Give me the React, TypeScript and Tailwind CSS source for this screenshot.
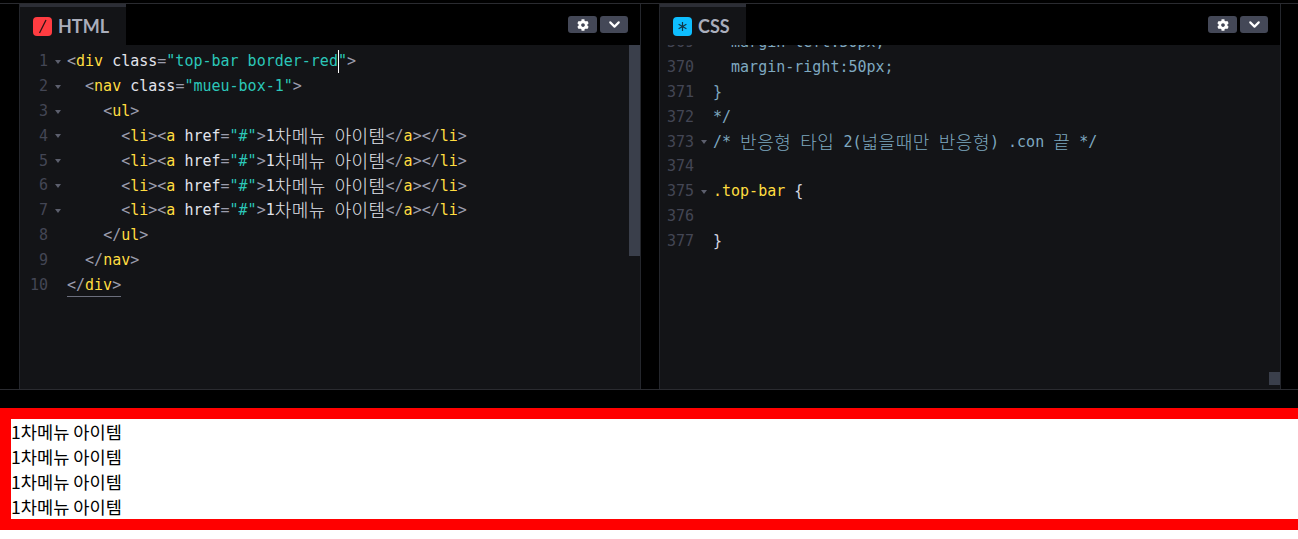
import type React from "react";
import { ChevronDown } from "lucide-react";
import { FaCog } from "react-icons/fa";

const monoFont = "font-['DejaVu_Sans_Mono','Noto_Sans_CJK_KR',monospace]";

// small syntax colour helpers
const P = ({ children }: { children: React.ReactNode }) => <span className="text-[#9b9dad]">{children}</span>;
const Tag = ({ children }: { children: React.ReactNode }) => <span className="text-[#ffdd40]">{children}</span>;
const Attr = ({ children }: { children: React.ReactNode }) => <span className="text-[#e2e4ec]">{children}</span>;
const Str = ({ children }: { children: React.ReactNode }) => <span className="text-[#2bc7b9]">{children}</span>;
const Han = ({ children }: { children: React.ReactNode }) => (
  <span className="align-[-2px] font-['Noto_Sans_CJK_KR',sans-serif] text-[18px] leading-none font-light tracking-[0.4px]">
    {children}
  </span>
);

const MenuLine = () => (
  <>
    {"      "}
    <P>&lt;</P>
    <Tag>li</Tag>
    <P>&gt;&lt;</P>
    <Tag>a</Tag> <Attr>href</Attr>
    <P>=</P>
    <Str>"#"</Str>
    <P>&gt;</P>
    <span className="text-[#e2e4ec]">
      1<Han>차메뉴</Han> <Han>아이템</Han>
    </span>
    <P>&lt;/</P>
    <Tag>a</Tag>
    <P>&gt;&lt;/</P>
    <Tag>li</Tag>
    <P>&gt;</P>
  </>
);

const htmlLines: { fold: boolean; code: React.ReactNode }[] = [
  {
    fold: true,
    code: (
      <>
        <P>&lt;</P>
        <Tag>div</Tag> <Attr>class</Attr>
        <P>=</P>
        <Str>"top-bar border-red</Str>
        <span className="relative">
          <span className="absolute left-0 top-[-2px] h-[23px] w-px bg-white" />
          <Str>"</Str>
        </span>
        <P>&gt;</P>
      </>
    ),
  },
  {
    fold: true,
    code: (
      <>
        {"  "}
        <P>&lt;</P>
        <Tag>nav</Tag> <Attr>class</Attr>
        <P>=</P>
        <Str>"mueu-box-1"</Str>
        <P>&gt;</P>
      </>
    ),
  },
  {
    fold: true,
    code: (
      <>
        {"    "}
        <P>&lt;</P>
        <Tag>ul</Tag>
        <P>&gt;</P>
      </>
    ),
  },
  { fold: true, code: <MenuLine /> },
  { fold: true, code: <MenuLine /> },
  { fold: true, code: <MenuLine /> },
  { fold: true, code: <MenuLine /> },
  {
    fold: false,
    code: (
      <>
        {"    "}
        <P>&lt;/</P>
        <Tag>ul</Tag>
        <P>&gt;</P>
      </>
    ),
  },
  {
    fold: false,
    code: (
      <>
        {"  "}
        <P>&lt;/</P>
        <Tag>nav</Tag>
        <P>&gt;</P>
      </>
    ),
  },
  {
    fold: false,
    code: (
      <span className="border-b border-[#6b6e7c] pb-[2px]">
        <P>&lt;/</P>
        <Tag>div</Tag>
        <P>&gt;</P>
      </span>
    ),
  },
];

const Comment = ({ children }: { children: React.ReactNode }) => <span className="text-[#7fa9c0]">{children}</span>;
const ComHan = ({ children }: { children: React.ReactNode }) => (
  <span className="align-[-2px] font-['Noto_Sans_CJK_KR',sans-serif] text-[18px] leading-none font-light tracking-[0.5px] text-[#7fa9c0]">
    {children}
  </span>
);

const cssLines: { num: number; fold: boolean; code: React.ReactNode }[] = [
  { num: 369, fold: false, code: <Comment>{"  margin-left:50px;"}</Comment> },
  { num: 370, fold: false, code: <Comment>{"  margin-right:50px;"}</Comment> },
  { num: 371, fold: false, code: <Comment>{"}"}</Comment> },
  { num: 372, fold: false, code: <Comment>{"*/"}</Comment> },
  {
    num: 373,
    fold: true,
    code: (
      <>
        <Comment>/* </Comment>
        <ComHan>반응형</ComHan>
        <Comment> </Comment>
        <ComHan>타입</ComHan>
        <Comment> 2(</Comment>
        <ComHan>넓을때만</ComHan>
        <Comment> </Comment>
        <ComHan>반응형</ComHan>
        <Comment>) .con </Comment>
        <ComHan>끝</ComHan>
        <Comment> */</Comment>
      </>
    ),
  },
  { num: 374, fold: false, code: "" },
  {
    num: 375,
    fold: true,
    code: (
      <>
        <Tag>.top-bar</Tag> <span className="text-[#d5d8e2]">{"{"}</span>
      </>
    ),
  },
  { num: 376, fold: false, code: "" },
  { num: 377, fold: false, code: <span className="text-[#d5d8e2]">{"}"}</span> },
];

const CodeRow = ({
  num,
  fold,
  gutter,
  children,
}: {
  num: number;
  fold: boolean;
  gutter: string;
  children: React.ReactNode;
}) => (
  <div className="flex h-[24.85px] items-center whitespace-pre">
    <span className={`${gutter} shrink-0 text-right text-[#434654]`}>{num}</span>
    <span className="flex w-[19px] shrink-0 justify-center">
      {fold && <span className="mt-[1px] h-0 w-0 border-x-[3px] border-t-[4px] border-x-transparent border-t-[#5c5f6d]" />}
    </span>
    <span className="leading-[24px]">{children}</span>
  </div>
);

const TabHeader = ({ icon, title, width }: { icon: React.ReactNode; title: string; width: string }) => (
  <div className="flex h-[41px] shrink-0 items-stretch justify-between bg-black">
    <div className={`flex ${width} items-center gap-[6px] border-t-[3px] border-[#2c2e36] bg-[#131417] pl-[13px] pt-[1px]`}>
      {icon}
      <span className="font-['Lato',sans-serif] text-[18px] font-bold text-[#aaaebc]">{title}</span>
    </div>
    <div className="flex gap-[3px] pr-[12px] pt-[12px]">
      <button className="flex h-[17px] w-[29px] items-center justify-center rounded-[3px] bg-[#444857] text-white">
        <FaCog size={12} />
      </button>
      <button className="flex h-[17px] w-[28px] items-center justify-center rounded-[3px] bg-[#444857] text-white">
        <ChevronDown size={17} strokeWidth={3} />
      </button>
    </div>
  </div>
);

const Panel = ({ header, children }: { header: React.ReactNode; children: React.ReactNode }) => (
  <div className="flex h-full w-[622px] flex-col border-x border-[#24262c] bg-[#131417]">
    {header}
    <div className="relative min-h-0 flex-1 overflow-hidden">{children}</div>
  </div>
);

export default function App() {
  return (
    <div className="flex h-[539px] w-[1298px] flex-col overflow-hidden bg-white">
      <div className="h-[390px] shrink-0 bg-black">
        <div className="mt-[3px] h-[387px] border-y border-[#2a2b30] pb-0">
          <div className={`flex h-full gap-[18px] pl-[19px] text-[15px] ${monoFont}`}>
            <Panel
              header={
                <TabHeader
                  title="HTML"
                  width="w-[106px]"
                  icon={
                    <span className="flex h-[19px] w-[19px] items-center justify-center rounded-[4px] bg-[#ff3c41]">
                      <svg width="11" height="15" viewBox="0 0 11 15">
                        <path d="M9 1 2.5 14" stroke="#2a1416" strokeWidth="1.3" />
                      </svg>
                    </span>
                  }
                />
              }
            >
              <div className="pt-[4px]">
                {htmlLines.map((l, i) => (
                  <CodeRow key={i} num={i + 1} fold={l.fold} gutter="w-[28px]">
                    {l.code}
                  </CodeRow>
                ))}
              </div>
              <div className="absolute right-0 top-0 h-[211px] w-[11px] bg-[#3a3f4b]" />
            </Panel>
            <Panel
              header={
                <TabHeader
                  title="CSS"
                  width="w-[86px]"
                  icon={
                    <span className="flex h-[19px] w-[19px] items-center justify-center rounded-[4px] bg-[#0ebeff]">
                      <svg width="11" height="11" viewBox="0 0 11 11">
                        <path d="M5.5 1v9M1.6 3.2l7.8 4.6M9.4 3.2 1.6 7.8" stroke="#10394a" strokeWidth="1.2" />
                      </svg>
                    </span>
                  }
                />
              }
            >
              <div className="mt-[-15px]">
                {cssLines.map((l) => (
                  <CodeRow key={l.num} num={l.num} fold={l.fold} gutter="w-[34px]">
                    {l.code}
                  </CodeRow>
                ))}
              </div>
              <div className="absolute bottom-[4px] right-0 h-[13px] w-[11px] bg-[#3a3f4b]" />
            </Panel>
          </div>
        </div>
      </div>
      <div className="h-[18px] shrink-0 bg-black" />
      <div className="w-[1320px] shrink-0 border-y-[11px] border-l-[11px] border-[#ff0000] bg-white font-['Noto_Sans_CJK_KR',sans-serif] text-[17.6px] leading-[25px] text-black">
        <div>1차메뉴 아이템</div>
        <div>1차메뉴 아이템</div>
        <div>1차메뉴 아이템</div>
        <div>1차메뉴 아이템</div>
      </div>
    </div>
  );
}
